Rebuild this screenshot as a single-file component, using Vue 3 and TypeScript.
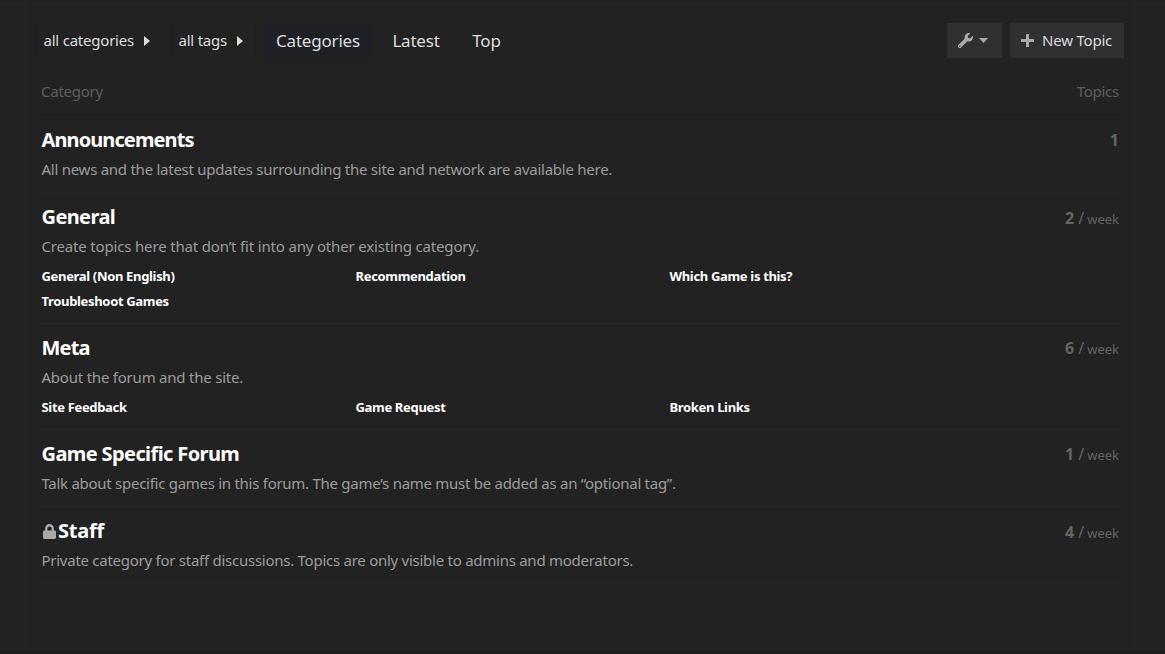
<script setup lang="ts">
interface Category {
  name: string
  description: string
  count: number
  weekly: boolean
  locked?: boolean
  children?: string[]
  kind: string
}

const categories: Category[] = [
  { kind: 'announcements', name: 'Announcements', description: 'All news and the latest updates surrounding the site and network are available here.', count: 1, weekly: false },
  { kind: 'general', name: 'General', description: 'Create topics here that don’t fit into any other existing category.', count: 2, weekly: true, children: ['General (Non English)', 'Recommendation', 'Which Game is this?', 'Troubleshoot Games'] },
  { kind: 'meta', name: 'Meta', description: 'About the forum and the site.', count: 6, weekly: true, children: ['Site Feedback', 'Game Request', 'Broken Links'] },
  { kind: 'specific', name: 'Game Specific Forum', description: 'Talk about specific games in this forum. The game’s name must be added as an “optional tag”.', count: 1, weekly: true },
  { kind: 'staff', name: 'Staff', description: 'Private category for staff discussions. Topics are only visible to admins and moderators.', count: 4, weekly: true, locked: true },
]
</script>

<template>
  <div class="page">
    <main class="panel">
      <header class="toolbar">
        <button class="drop cats"><span>all categories</span><svg width="6" height="10" viewBox="0 0 6 10"><path d="M0 0 6 5 0 10Z" /></svg></button>
        <button class="drop tags"><span>all tags</span><svg width="6" height="10" viewBox="0 0 6 10"><path d="M0 0 6 5 0 10Z" /></svg></button>
        <nav class="pills">
          <a class="pill active">Categories</a>
          <a class="pill latest">Latest</a>
          <a class="pill top">Top</a>
        </nav>
        <button class="btn admin">
          <svg width="15" height="15" viewBox="0 0 512 512"><path d="M507.7 109.1c-2.200-9-13.500-12.100-20.100-5.500l-74.400 74.400-67.900-11.300L334 98.900l74.400-74.400c6.600-6.600 3.400-17.900-5.700-20.200-47.400-11.700-99.600.9-136.600 37.900-39.600 39.600-50.500 97.100-34.100 147.200L18.700 402.800c-25 25-25 65.500 0 90.500s65.500 25 90.500 0l213.200-213.200c50.100 16.700 107.500 5.700 147.400-34.200 37.100-37.100 49.700-89.300 37.900-136.800zM64 472c-13.300 0-24-10.700-24-24s10.700-24 24-24 24 10.700 24 24-10.700 24-24 24z" /></svg>
          <svg width="9" height="5" viewBox="0 0 9 5"><path d="M0 0H9L4.500 5Z" /></svg>
        </button>
        <button class="btn new">
          <svg width="13" height="13" viewBox="0 0 13 13"><path d="M5 .6Q5 0 5.600 0H7.400Q8 0 8 .6V5H12.400Q13 5 13 5.600V7.400Q13 8 12.400 8H8V12.400Q8 13 7.400 13H5.600Q5 13 5 12.400V8H.6Q0 8 0 7.400V5.600Q0 5 .6 5H5Z" /></svg>
          <span>New Topic</span>
        </button>
      </header>
      <div class="head"><span class="h-cat">Category</span><span class="h-top">Topics</span></div>
      <section v-for="c in categories" :key="c.name" class="row" :class="c.kind">
        <div class="info">
          <h3>
            <svg v-if="c.locked" width="13" height="15" viewBox="0 0 448 512"><path d="M400 224h-24v-72C376 68.200 307.800 0 224 0S72 68.200 72 152v72H48c-26.500 0-48 21.500-48 48v192c0 26.500 21.500 48 48 48h352c26.500 0 48-21.500 48-48V272c0-26.500-21.500-48-48-48zm-104 0H152v-72c0-39.700 32.300-72 72-72s72 32.300 72 72v72z" /></svg>
            <span>{{ c.name }}</span>
          </h3>
          <p><span>{{ c.description }}</span></p>
          <div v-if="c.children" class="subs"><a v-for="s in c.children" :key="s">{{ s }}</a></div>
        </div>
        <div class="stat"><b>{{ c.count }}</b><template v-if="c.weekly"><i>/</i><small>week</small></template></div>
      </section>
    </main>
  </div>
</template>

<style>
body { background: #222; }
</style>

<style scoped>
.page { box-sizing: border-box; height: 654px; overflow: hidden; padding: 0 30px 0 25px; background: #222; border-top: 1px solid #1e1e1e; border-bottom: 3px solid #1e1e1e; font-family: "Noto Sans", sans-serif; font-size: 15px; color: #ddd; }
.panel { box-sizing: border-box; height: 100%; border: 1px solid #252525; border-width: 0 1px; padding: 22px 10px 0; }
.toolbar { display: flex; height: 35px; }
button { box-sizing: border-box; font: inherit; color: #ddd; margin: 0; padding: 0; height: 35px; border: 0; background: none; display: flex; align-items: center; white-space: nowrap; line-height: 20px; }
button span { padding-bottom: 2px; }
svg { fill: currentColor; flex: none; display: block; }
.drop { border: 1px solid #202024; padding: 0 12px 0 6.500px; justify-content: space-between; margin-right: 8px; letter-spacing: -.22px; }
.cats { width: 127px; }
.tags { width: 85px; }
.pills { display: flex; font-size: 17px; line-height: 35px; letter-spacing: -.2px; }
.pill { text-align: center; white-space: nowrap; }
.active { width: 108px; background: #1f2025; }
.latest { width: 88px; }
.top { width: 53px; }
.btn { background: #303030; }
.admin { width: 55px; margin-left: auto; padding-left: 11px; gap: 6px; color: #aaa; }
.new { width: 114px; margin-left: 8px; padding-left: 11px; gap: 8px; letter-spacing: -.2px; }
.new svg { color: #aaa; }
.head { display: flex; justify-content: space-between; box-sizing: border-box; height: 58px; padding: 22px 5px 0; line-height: 22px; color: #5e5e5e; border-bottom: 2px solid #202024; letter-spacing: -.25px; }
.row { box-sizing: border-box; height: 77px; display: flex; justify-content: space-between; border-bottom: 1px solid #262626; padding: 10px 5px 0 5.500px; }
.general { height: 131px; }
.meta { height: 106px; }
h3 { margin: 0; height: 28px; line-height: 28px; font-size: 20px; font-weight: 700; color: #fff; display: flex; align-items: center; letter-spacing: -.6px; white-space: nowrap; }
h3 svg { color: #aaa; margin: 0 2.500px 0 1px; }
p { margin: 4px 0 0; height: 22px; line-height: 22px; color: #9c9c9c; white-space: nowrap; letter-spacing: -.26px; }
.announcements h3 { letter-spacing: -.9px; }
.general p { letter-spacing: -.17px; }
.meta h3 { letter-spacing: -.8px; }
.meta p { letter-spacing: -.22px; }
.specific p { letter-spacing: -.275px; }
.staff h3 { letter-spacing: -.2px; }
.info { width: 943px; }
.subs { display: grid; grid-template-columns: repeat(3, 314px); margin-top: 7px; font-size: 13px; font-weight: 700; line-height: 25px; color: #fff; letter-spacing: -.33px; }
.stat { display: flex; align-items: baseline; height: 28px; line-height: 28px; color: #646464; font-size: 16px; }
.general .stat, .staff .stat { padding-top: 1px; }
.stat i { font-style: normal; margin: 0 3px 0 4px; }
.stat small { font-size: 13px; }
</style>
